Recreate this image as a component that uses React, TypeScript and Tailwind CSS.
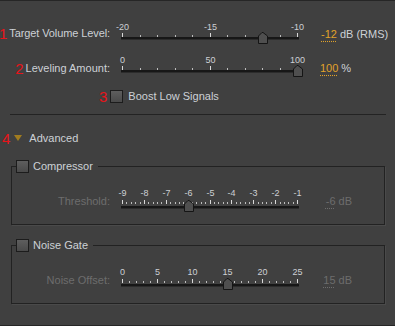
import React from "react";

const FONT = { fontFamily: '"Liberation Sans", Arial, sans-serif' };

type SliderProps = {
  min: number;
  max: number;
  labelStep: number;
  minorStep: number;
  value: number;
  tickBottom?: number;
  trackTop?: number;
  thumbTop?: number;
};

function pos(v: number, min: number, max: number) {
  return Math.round(10 + ((v - min) / (max - min)) * 175);
}

function Slider({
  min,
  max,
  labelStep,
  minorStep,
  value,
  tickBottom = 16,
  trackTop = 16,
  thumbTop = 11,
}: SliderProps) {
  const ticks: { x: number; major: boolean }[] = [];
  const n = Math.round((max - min) / minorStep);
  const per = Math.round(labelStep / minorStep);
  for (let i = 0; i <= n; i++) {
    const v = min + i * minorStep;
    ticks.push({ x: pos(v, min, max), major: i % per === 0 });
  }
  const labels: number[] = [];
  for (let v = min; v <= max + 1e-9; v += labelStep) labels.push(Math.round(v));
  const tx = pos(value, min, max);
  return (
    <div className="relative w-[200px] h-[24px] shrink-0">
      {labels.map((l) => (
        <span
          key={l}
          className="absolute top-0 -translate-x-1/2 text-[9px] leading-[12px] text-[#cdd0d4]"
          style={{ left: pos(l, min, max) + 0.5 }}
        >
          {l}
        </span>
      ))}
      {ticks.map((t, i) => (
        <span
          key={i}
          className={
            t.major
              ? "absolute h-[4px] w-px bg-[#d8d8d8]"
              : "absolute h-[2px] w-px bg-[#bdbdbd]"
          }
          style={{ left: t.x, top: t.major ? tickBottom - 4 : tickBottom - 2 }}
        />
      ))}
      <div
        className="absolute left-[9px] w-[178px] h-[3px] bg-[#171717] border-b border-[#2c2c2c]"
        style={{ top: trackTop }}
      />
      <svg
        className="absolute"
        style={{ left: tx - 4, top: thumbTop }}
        width="10"
        height="12"
        viewBox="0 0 10 12"
      >
        <path
          d="M0.5 11.5 V4 L4 0.5 H5 L9.5 4 V11.5 Z"
          fill="#4f4f4f"
          stroke="#151515"
        />
      </svg>
    </div>
  );
}

function Checkbox() {
  return (
    <div className="w-[13px] h-[13px] shrink-0 border border-[#1c1c1c] bg-linear-to-b from-[#5e5e5e] to-[#4a4a4a]" />
  );
}

function Red({ children }: { children: React.ReactNode }) {
  return (
    <span className="text-[#e8141a] text-[15px] leading-[13px] mr-[2px]">
      {children}
    </span>
  );
}

export default function App() {
  return (
    <div
      className="w-[395px] h-[326px] bg-[#404040] border-t border-b border-[#262626] flex flex-col text-[11px] text-[#cdd1d6] whitespace-nowrap"
      style={FONT}
    >
      {/* Row 1 */}
      <div className="flex items-start mt-[20px]">
        <div className="w-[110px] flex justify-end items-end mt-[6px] leading-[13px]">
          <Red>1</Red>
          <span className="tracking-[-0.1px]">Target Volume Level:</span>
        </div>
        <div className="ml-[2px]">
          <Slider min={-20} max={-10} labelStep={5} minorStep={1} value={-12} />
        </div>
        <div className="ml-[9px] mt-[7px] leading-[13px] flex items-baseline">
          <span className="text-[#e0a22a] underline decoration-dotted decoration-[#e0a22a] underline-offset-[3px]">
            -12
          </span>
          <span className="ml-[3px]">dB (RMS)</span>
        </div>
      </div>

      {/* Row 2 */}
      <div className="flex items-start mt-[9px]">
        <div className="w-[110px] flex justify-end items-end mt-[8px] leading-[13px]">
          <Red>2</Red>
          <span>Leveling Amount:</span>
        </div>
        <div className="ml-[2px]">
          <Slider min={0} max={100} labelStep={50} minorStep={10} value={100} />
        </div>
        <div className="ml-[8px] mt-[8px] leading-[13px] flex items-baseline">
          <span className="text-[#e0a22a] underline decoration-dotted decoration-[#e0a22a] underline-offset-[3px]">
            100
          </span>
          <span className="ml-[3px]">%</span>
        </div>
      </div>

      {/* Row 3 */}
      <div className="flex items-center h-[13px] mt-[12px] pl-[99px]">
        <Red>3</Red>
        <span className="ml-[1px]">
          <Checkbox />
        </span>
        <span className="ml-[5px] leading-[13px]">Boost Low Signals</span>
      </div>

      {/* Divider */}
      <div className="h-px ml-[10px] w-[376px] bg-[#232323] mt-[11px]" />

      {/* Advanced */}
      <div className="flex items-center h-[14px] mt-[16px] pl-[2px]">
        <Red>4</Red>
        <svg className="ml-[2px]" width="8" height="6" viewBox="0 0 8 6">
          <path d="M0 0 H8 L4 6 Z" fill="#a17c1f" />
        </svg>
        <span className="ml-[7px] leading-[13px]">Advanced</span>
      </div>

      {/* Compressor */}
      <fieldset className="ml-[11px] w-[374px] mt-[15px] border border-[#222] shadow-[1px_1px_0_#4a4a4a] pb-[13px] min-w-0">
        <legend className="ml-[4px] pr-[5px] flex items-center h-[13px]">
          <Checkbox />
          <span className="ml-[4px] leading-[13px]">Compressor</span>
        </legend>
        <div className="flex items-start mt-[14px]">
          <div className="w-[98px] text-right mt-[8px] leading-[13px] text-[#6d6d6d]">
            Threshold:
          </div>
          <div className="ml-[2px]">
            <Slider
              min={-9}
              max={-1}
              labelStep={1}
              minorStep={0.2}
              value={-6}
              tickBottom={17}
              trackTop={19}
              thumbTop={13}
            />
          </div>
          <div className="w-[40px] text-right mt-[8px] leading-[13px] text-[#6d6d6d]">
            <span className="underline decoration-dotted decoration-[#6d6d6d] underline-offset-[3px]">
              -6
            </span>
            <span className="ml-[3px]">dB</span>
          </div>
        </div>
      </fieldset>

      {/* Noise Gate */}
      <fieldset className="ml-[11px] w-[374px] mt-[14px] border border-[#222] shadow-[1px_1px_0_#4a4a4a] pb-[13px] min-w-0">
        <legend className="ml-[4px] pr-[5px] flex items-center h-[13px]">
          <Checkbox />
          <span className="ml-[4px] leading-[13px]">Noise Gate</span>
        </legend>
        <div className="flex items-start mt-[14px]">
          <div className="w-[98px] text-right mt-[8px] leading-[13px] text-[#6d6d6d]">
            Noise Offset:
          </div>
          <div className="ml-[2px]">
            <Slider
              min={0}
              max={25}
              labelStep={5}
              minorStep={1}
              value={15}
              tickBottom={17}
              trackTop={18}
              thumbTop={12}
            />
          </div>
          <div className="w-[40px] text-right mt-[8px] leading-[13px] text-[#6d6d6d]">
            <span className="underline decoration-dotted decoration-[#6d6d6d] underline-offset-[3px]">
              15
            </span>
            <span className="ml-[3px]">dB</span>
          </div>
        </div>
      </fieldset>
    </div>
  );
}
